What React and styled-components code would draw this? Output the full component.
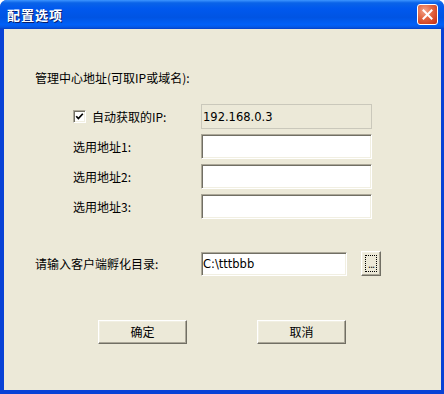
import React from "react";
import styled, { createGlobalStyle } from "styled-components";

const Global = createGlobalStyle`
  html, body { margin: 0; padding: 0; width: 444px; height: 394px; overflow: hidden; background: #ffffff; }
  * { box-sizing: border-box; }
`;

const Window = styled.div`
  width: 444px;
  height: 394px;
  display: flex;
  flex-direction: column;
  background: #0842d6;
  border-radius: 7px 7px 0 0;
  overflow: hidden;
  font-family: "Noto Sans CJK SC", "DejaVu Sans", sans-serif;
  font-size: 12px;
  color: #000;
`;

const TitleBar = styled.div`
  height: 29px;
  flex: none;
  display: flex;
  align-items: center;
  justify-content: space-between;
  padding: 0 6px 0 7px;
  background: linear-gradient(
    to bottom,
    #3d95ff 0%,
    #0a63e8 10%,
    #0058ee 30%,
    #0054e3 60%,
    #0060f8 85%,
    #0458e6 93%,
    #0340c9 100%
  );
`;

const Title = styled.span`
  color: #ffffff;
  font-weight: bold;
  font-size: 13px;
  letter-spacing: 1px;
  text-shadow: 1px 1px 0 #0a1e6b;
  line-height: 16px;
`;

const CloseButton = styled.div`
  width: 21px;
  height: 21px;
  border: 1px solid #ffffff;
  border-radius: 3px;
  background: radial-gradient(circle at 35% 30%, #f3a48a 0%, #e36a45 40%, #cf3e1f 80%, #b8321a 100%);
  display: flex;
  align-items: center;
  justify-content: center;
`;

const Body = styled.div`
  flex: 1;
  margin: 0 3px 4px 4px;
  background: #ece9d8;
  padding: 42px 0 0 31px;
  display: flex;
  flex-direction: column;
`;

const Heading = styled.div`
  height: 14px;
  line-height: 14px;
`;

const FormGrid = styled.div`
  margin: 19px 0 0 38px;
  display: grid;
  grid-template-columns: 128px 171px;
  grid-auto-rows: 25px;
  row-gap: 5px;
  align-items: center;
`;

const Label = styled.label`
  display: flex;
  align-items: center;
  gap: 6px;
  line-height: 14px;
  width: ${(p) => (p.$width ? `${p.$width}px` : "auto")};
  flex: none;
`;

const CheckBox = styled.span`
  width: 13px;
  height: 13px;
  background: #ffffff;
  border-top: 1px solid #aca899;
  border-left: 1px solid #aca899;
  border-right: 1px solid #ffffff;
  border-bottom: 1px solid #ffffff;
  box-shadow: inset 1px 1px 0 #716f64, inset -1px -1px 0 #f1efe2;
  display: flex;
  align-items: center;
  justify-content: center;
`;

const Field = styled.div`
  height: ${(p) => (p.$height ? p.$height : 25)}px;
  width: ${(p) => (p.$width ? `${p.$width}px` : "100%")};
  display: flex;
  align-items: center;
  padding-left: 1px;
  font-family: "DejaVu Sans", "Noto Sans CJK SC", sans-serif;
  font-size: 11.5px;
  background: ${(p) => (p.$disabled ? "#ece9d8" : "#ffffff")};
  ${(p) =>
    p.$disabled
      ? `border: 1px solid #cac8bb;`
      : `border-top: 1px solid #aca899;
         border-left: 1px solid #aca899;
         border-right: 1px solid #ffffff;
         border-bottom: 1px solid #ffffff;
         box-shadow: inset 1px 1px 0 #716f64, inset -1px -1px 0 #f1efe2;`}
`;

const DirRow = styled.div`
  margin-top: 32px;
  display: flex;
  align-items: center;
  height: 25px;
`;

const BrowseButton = styled.div`
  margin-left: 14px;
  width: 20px;
  height: 25px;
  background: #ece9d8;
  border-top: 1px solid #ffffff;
  border-left: 1px solid #ffffff;
  border-right: 1px solid #716f64;
  border-bottom: 1px solid #716f64;
  box-shadow: inset -1px -1px 0 #aca899, inset 1px 1px 0 #f1efe2;
  padding: 3px;
  display: flex;
`;

const FocusRect = styled.div`
  flex: 1;
  border: 1px dotted #000;
  display: flex;
  align-items: flex-end;
  justify-content: center;
  font-family: "DejaVu Sans", sans-serif;
  font-size: 10px;
  line-height: 8px;
  padding-bottom: 2px;
  letter-spacing: -1px;
`;

const ButtonRow = styled.div`
  margin: 44px 0 0 63px;
  display: flex;
  gap: 70px;
`;

const Button = styled.div`
  width: 89px;
  height: 24px;
  background: #ece9d8;
  border-top: 1px solid #ffffff;
  border-left: 1px solid #ffffff;
  border-right: 1px solid #716f64;
  border-bottom: 1px solid #716f64;
  box-shadow: inset -1px -1px 0 #aca899, inset 1px 1px 0 #f1efe2;
  display: flex;
  align-items: center;
  justify-content: center;
  line-height: 14px;
`;

export default function App() {
  return (
    <>
      <Global />
      <Window>
        <TitleBar>
          <Title>配置选项</Title>
          <CloseButton>
            <svg width="11" height="11" viewBox="0 0 11 11">
              <path d="M1.5 1.5 L9.5 9.5 M9.5 1.5 L1.5 9.5" stroke="#ffffff" strokeWidth="2" strokeLinecap="square" />
            </svg>
          </CloseButton>
        </TitleBar>
        <Body>
          <Heading>管理中心地址(可取IP或域名):</Heading>
          <FormGrid>
            <Label>
              <CheckBox>
                <svg width="9" height="9" viewBox="0 0 9 9">
                  <polyline points="1.2,4.2 3.4,6.6 7.8,1.8" fill="none" stroke="#000" strokeWidth="1.7" />
                </svg>
              </CheckBox>
              自动获取的IP:
            </Label>
            <Field $disabled>192.168.0.3</Field>
            <Label>选用地址1:</Label>
            <Field />
            <Label>选用地址2:</Label>
            <Field />
            <Label>选用地址3:</Label>
            <Field />
          </FormGrid>
          <DirRow>
            <Label $width={166}>请输入客户端孵化目录:</Label>
            <Field $width={146} $height={24}>C:\tttbbb</Field>
            <BrowseButton>
              <FocusRect>...</FocusRect>
            </BrowseButton>
          </DirRow>
          <ButtonRow>
            <Button>确定</Button>
            <Button>取消</Button>
          </ButtonRow>
        </Body>
      </Window>
    </>
  );
}
